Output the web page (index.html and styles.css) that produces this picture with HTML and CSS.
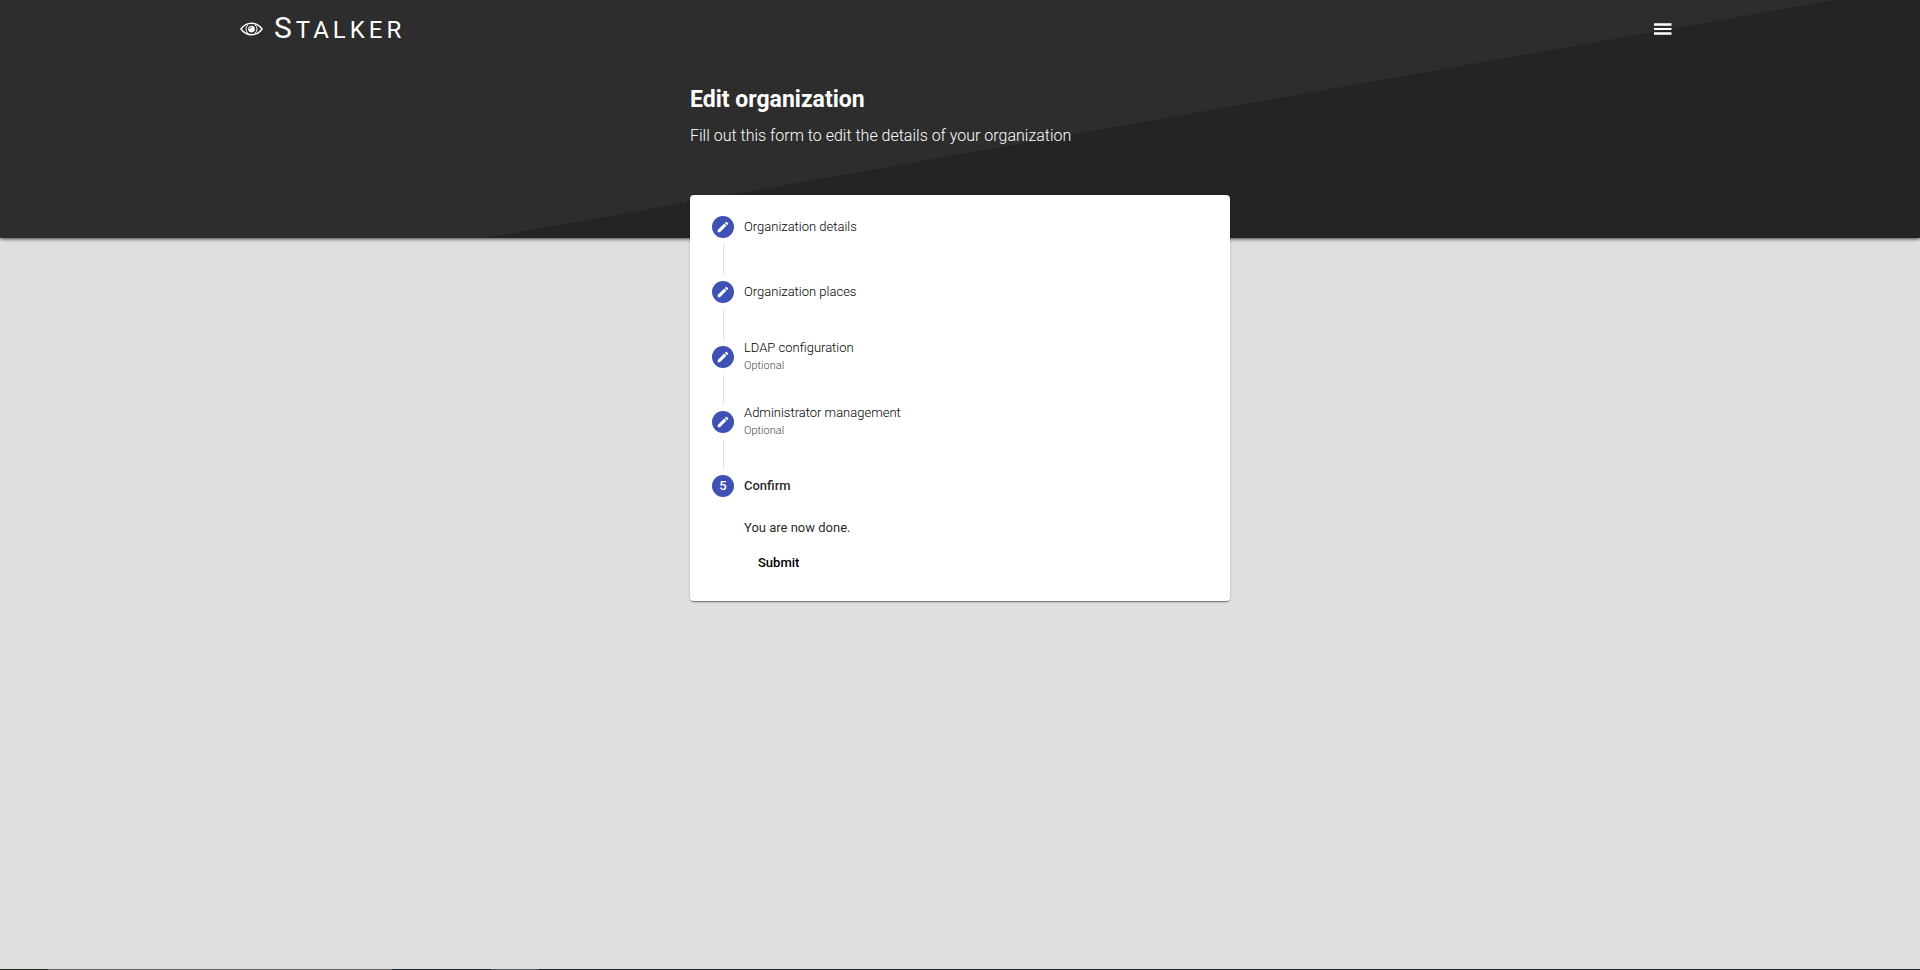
FILE: index.html
```html
<!DOCTYPE html>
<html lang="en">
<head>
<meta charset="utf-8">
<title>Stalker - Edit organization</title>
<link rel="stylesheet" href="styles.css">
</head>
<body>
<svg class="defs" aria-hidden="true">
  <symbol id="pencil" viewBox="0 0 24 24"><path fill="currentColor" d="M20.7 7c.4-.4.4-1 0-1.400l-2.300-2.300c-.4-.4-1-.4-1.400 0l-1.800 1.800 3.700 3.700M3 17.300V21h3.700L17.800 9.900l-3.700-3.700z"/></symbol>
</svg>
<header class="banner">
  <nav class="topbar">
    <a class="brand" href="#">
      <svg class="brand-icon" viewBox="0 0 24 14" fill="none" stroke="currentColor" aria-hidden="true">
        <path stroke-width="1.500" d="M1 7C4 3 7.800 1 12 1s8 2 11 6c-3 4-6.800 6-11 6S4 11 1 7z"/>
        <path stroke-width="1" d="M8.200 2.800a5.500 5.500 0 0 0 0 8.400M15.800 2.800a5.500 5.500 0 0 1 0 8.400"/>
        <circle cx="12" cy="7" r="3.500" fill="currentColor" stroke="none"/>
        <path stroke="#2d2d2d" stroke-width=".9" d="M10 7a2 2 0 0 1 2-2"/>
      </svg>
      <span class="brand-name">Stalker</span>
    </a>
    <button class="menu" type="button" aria-label="Menu">
      <svg viewBox="0 0 24 24" aria-hidden="true"><path fill="currentColor" d="M3 6.300h17.500v2.400H3zM3 11h17.500v2H3zM3 15.300h17.500v2.400H3z"/></svg>
    </button>
  </nav>
  <div class="intro">
    <h1 class="title">Edit organization</h1>
    <p class="subtitle">Fill out this form to edit the details of your organization</p>
  </div>
</header>
<main class="card">
  <ol class="steps">
    <li class="step"><span class="dot"><svg><use href="#pencil"/></svg></span><span class="label">Organization details</span></li>
    <li class="step"><span class="dot"><svg><use href="#pencil"/></svg></span><span class="label">Organization places</span></li>
    <li class="step"><span class="dot"><svg><use href="#pencil"/></svg></span><span class="label">LDAP configuration<small class="note">Optional</small></span></li>
    <li class="step"><span class="dot"><svg><use href="#pencil"/></svg></span><span class="label">Administrator management<small class="note">Optional</small></span></li>
    <li class="step active"><span class="dot">5</span><span class="label">Confirm</span></li>
  </ol>
  <div class="content">
    <p class="message">You are now done.</p>
    <button class="submit" type="submit">Submit</button>
  </div>
</main>
<footer class="strip"></footer>
</body>
</html>
```
FILE: styles.css
```css
* { box-sizing: border-box; }
body {
  margin: 0;
  min-height: 100vh;
  display: flex;
  flex-direction: column;
  background: #dfdfdf;
  color: rgba(0, 0, 0, .87);
  font: 13px/18px Roboto, "Liberation Sans", sans-serif;
}
.defs { position: absolute; width: 0; height: 0; }
.banner {
  padding-bottom: 90px;
  color: #fff;
  background: linear-gradient(170deg, #2d2d2d 56.1%, #242424 56.1%);
  box-shadow: 0 2px 4px -1px rgba(0, 0, 0, .4), 0 1px 3px rgba(0, 0, 0, .4);
}
.topbar {
  width: 75%;
  height: 58px;
  margin: 0 auto;
  display: flex;
  align-items: center;
  justify-content: space-between;
}
.brand {
  display: flex;
  align-items: center;
  gap: 11px;
  color: inherit;
  text-decoration: none;
}
.brand-icon { width: 23px; height: 14px; }
.brand-name {
  display: block;
  font-size: 24px;
  line-height: 36px;
  text-transform: uppercase;
  letter-spacing: 4px;
}
.brand-name::first-letter { font-size: 30px; }
.menu {
  margin-right: 5px;
  padding: 0;
  display: flex;
  border: 0;
  background: none;
  color: inherit;
}
.menu svg { width: 24px; height: 24px; }
.intro, .card { width: 540px; max-width: 100%; margin: 0 auto; }
.intro { padding-top: 28px; }
.title { margin: 0 0 10px; font-size: 23px; line-height: 28px; font-weight: 700; }
.subtitle { margin: 0; font-size: 16px; line-height: 24px; font-weight: 300; }
.card {
  margin-top: -43px;
  padding: 21px 22px 24px;
  border-radius: 4px;
  background: #fff;
  box-shadow: 0 2px 1px -1px rgba(0, 0, 0, .4), 0 1px 3px rgba(0, 0, 0, .2);
}
.steps { margin: 0; padding: 0; list-style: none; }
.step {
  display: grid;
  grid-template-columns: 22px 1fr;
  grid-template-rows: 22px 29px;
  row-gap: 7px;
  column-gap: 10px;
  align-items: center;
  padding-bottom: 7px;
  color: #000;
  font-weight: 300;
}
.step:not(.active)::after {
  content: "";
  justify-self: center;
  width: 1px;
  height: 29px;
  background: #e0e0e0;
}
.step.active {
  grid-template-rows: 22px;
  margin-top: -1px;
  padding: 0;
  color: rgba(0, 0, 0, .87);
  font-weight: 500;
}
.dot {
  width: 22px;
  height: 22px;
  display: flex;
  align-items: center;
  justify-content: center;
  border-radius: 50%;
  background: #3f51b5;
  color: #fff;
  font-weight: 500;
}
.dot svg { width: 14px; height: 14px; }
.label { display: flex; flex-direction: column; justify-self: start; margin: -8px 0; }
.note { padding-bottom: 2px; font-size: 11px; line-height: 17px; color: rgba(0, 0, 0, .8); }
.content { padding: 22px 0 0 32px; }
.message { margin: 0 0 12px; }
.submit {
  padding: 0 14px;
  border: 0;
  background: none;
  color: #000;
  font: 500 13px/28px Roboto, "Liberation Sans", sans-serif;
}
.strip {
  height: 1px;
  margin-top: auto;
  background: linear-gradient(90deg, #263029 48px, #606060 48px 392px, #202a31 392px 491px, #505a61 491px 539px, #202a31 539px);
}
```
